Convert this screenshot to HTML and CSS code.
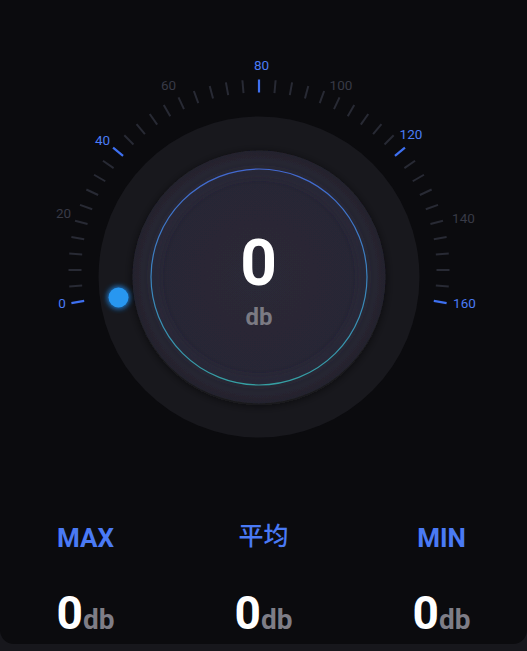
FILE: index.html
```html
<!DOCTYPE html>
<html lang="zh">
<head>
<meta charset="utf-8">
<title>分贝仪</title>
<link rel="stylesheet" href="styles.css">
</head>
<body>
<div class="card">
  <svg class="gauge" width="527" height="470" viewBox="0 0 527 470">
    <defs>
      <radialGradient id="innerFill" cx="50%" cy="50%" r="50%">
        <stop offset="0%" stop-color="#2a2937"/>
        <stop offset="85%" stop-color="#282734"/>
        <stop offset="100%" stop-color="#24232d"/>
      </radialGradient>
      <linearGradient id="ringStroke" x1="0" y1="0" x2="0" y2="1">
        <stop offset="0%" stop-color="#4268d2"/>
        <stop offset="55%" stop-color="#3a86bd"/>
        <stop offset="100%" stop-color="#35a0a3"/>
      </linearGradient>
      <filter id="shadow" x="-20%" y="-20%" width="140%" height="140%">
        <feDropShadow dx="0" dy="2" stdDeviation="5" flood-color="#0a0a0e" flood-opacity="0.6"/>
      </filter>
      <filter id="glow" x="-100%" y="-100%" width="300%" height="300%">
        <feGaussianBlur stdDeviation="2.5"/>
      </filter>
      <filter id="ringGlow" x="-10%" y="-10%" width="120%" height="120%">
        <feGaussianBlur stdDeviation="4"/>
      </filter>
    </defs>

    <circle class="disk-outer" cx="259" cy="277" r="160.5"/>
    <circle cx="259" cy="277" r="126.5" fill="url(#innerFill)" filter="url(#shadow)"/>
    <circle cx="259" cy="277" r="104" fill="none" stroke="#2d2c3b" stroke-width="4" filter="url(#ringGlow)"/>
    <circle cx="259" cy="277" r="108" fill="none" stroke="url(#ringStroke)" stroke-width="1.2"/>

    <g class="ticks">
      <line class="tick tick-major" x1="68.5" y1="270" x2="81.5" y2="270" transform="rotate(-10 259 270)"/>
      <line class="tick" x1="68.5" y1="270" x2="81.5" y2="270" transform="rotate(-5 259 270)"/>
      <line class="tick" x1="68.5" y1="270" x2="81.5" y2="270" transform="rotate(0 259 270)"/>
      <line class="tick" x1="68.5" y1="270" x2="81.5" y2="270" transform="rotate(5 259 270)"/>
      <line class="tick" x1="68.5" y1="270" x2="81.5" y2="270" transform="rotate(10 259 270)"/>
      <line class="tick" x1="68.5" y1="270" x2="81.5" y2="270" transform="rotate(15 259 270)"/>
      <line class="tick" x1="68.5" y1="270" x2="81.5" y2="270" transform="rotate(20 259 270)"/>
      <line class="tick" x1="68.5" y1="270" x2="81.5" y2="270" transform="rotate(25 259 270)"/>
      <line class="tick" x1="68.5" y1="270" x2="81.5" y2="270" transform="rotate(30 259 270)"/>
      <line class="tick" x1="68.5" y1="270" x2="81.5" y2="270" transform="rotate(35 259 270)"/>
      <line class="tick tick-major" x1="68.5" y1="270" x2="81.5" y2="270" transform="rotate(40 259 270)"/>
      <line class="tick" x1="68.5" y1="270" x2="81.5" y2="270" transform="rotate(45 259 270)"/>
      <line class="tick" x1="68.5" y1="270" x2="81.5" y2="270" transform="rotate(50 259 270)"/>
      <line class="tick" x1="68.5" y1="270" x2="81.5" y2="270" transform="rotate(55 259 270)"/>
      <line class="tick" x1="68.5" y1="270" x2="81.5" y2="270" transform="rotate(60 259 270)"/>
      <line class="tick" x1="68.5" y1="270" x2="81.5" y2="270" transform="rotate(65 259 270)"/>
      <line class="tick" x1="68.5" y1="270" x2="81.5" y2="270" transform="rotate(70 259 270)"/>
      <line class="tick" x1="68.5" y1="270" x2="81.5" y2="270" transform="rotate(75 259 270)"/>
      <line class="tick" x1="68.5" y1="270" x2="81.5" y2="270" transform="rotate(80 259 270)"/>
      <line class="tick" x1="68.5" y1="270" x2="81.5" y2="270" transform="rotate(85 259 270)"/>
      <line class="tick tick-major" x1="68.5" y1="270" x2="81.5" y2="270" transform="rotate(90 259 270)"/>
      <line class="tick" x1="68.5" y1="270" x2="81.5" y2="270" transform="rotate(95 259 270)"/>
      <line class="tick" x1="68.5" y1="270" x2="81.5" y2="270" transform="rotate(100 259 270)"/>
      <line class="tick" x1="68.5" y1="270" x2="81.5" y2="270" transform="rotate(105 259 270)"/>
      <line class="tick" x1="68.5" y1="270" x2="81.5" y2="270" transform="rotate(110 259 270)"/>
      <line class="tick" x1="68.5" y1="270" x2="81.5" y2="270" transform="rotate(115 259 270)"/>
      <line class="tick" x1="68.5" y1="270" x2="81.5" y2="270" transform="rotate(120 259 270)"/>
      <line class="tick" x1="68.5" y1="270" x2="81.5" y2="270" transform="rotate(125 259 270)"/>
      <line class="tick" x1="68.5" y1="270" x2="81.5" y2="270" transform="rotate(130 259 270)"/>
      <line class="tick" x1="68.5" y1="270" x2="81.5" y2="270" transform="rotate(135 259 270)"/>
      <line class="tick tick-major" x1="68.5" y1="270" x2="81.5" y2="270" transform="rotate(140 259 270)"/>
      <line class="tick" x1="68.5" y1="270" x2="81.5" y2="270" transform="rotate(145 259 270)"/>
      <line class="tick" x1="68.5" y1="270" x2="81.5" y2="270" transform="rotate(150 259 270)"/>
      <line class="tick" x1="68.5" y1="270" x2="81.5" y2="270" transform="rotate(155 259 270)"/>
      <line class="tick" x1="68.5" y1="270" x2="81.5" y2="270" transform="rotate(160 259 270)"/>
      <line class="tick" x1="68.5" y1="270" x2="81.5" y2="270" transform="rotate(165 259 270)"/>
      <line class="tick" x1="68.5" y1="270" x2="81.5" y2="270" transform="rotate(170 259 270)"/>
      <line class="tick" x1="68.5" y1="270" x2="81.5" y2="270" transform="rotate(175 259 270)"/>
      <line class="tick" x1="68.5" y1="270" x2="81.5" y2="270" transform="rotate(180 259 270)"/>
      <line class="tick" x1="68.5" y1="270" x2="81.5" y2="270" transform="rotate(185 259 270)"/>
      <line class="tick tick-major" x1="68.5" y1="270" x2="81.5" y2="270" transform="rotate(190 259 270)"/>
    </g>

    <g class="labels">
      <text class="lbl lbl-major" x="62" y="307.5">0</text>
      <text class="lbl" x="63.5" y="218">20</text>
      <text class="lbl lbl-major" x="102.5" y="145">40</text>
      <text class="lbl" x="168.5" y="90">60</text>
      <text class="lbl lbl-major" x="261.5" y="69.5">80</text>
      <text class="lbl" x="341" y="90">100</text>
      <text class="lbl lbl-major" x="411" y="138.5">120</text>
      <text class="lbl" x="463.5" y="222.5">140</text>
      <text class="lbl lbl-major" x="464.5" y="307.5">160</text>
    </g>

    <circle cx="118.5" cy="297.5" r="11.5" fill="#1f8cf0" opacity="0.75" filter="url(#glow)"/>
    <circle class="dot" cx="118.5" cy="297.5" r="10"/>

    <text class="value" x="258.5" y="285">0</text>
    <text class="unit" x="259" y="325">db</text>
  </svg>

  <div class="stats">
    <div class="stat-label">MAX</div>
    <div class="stat-label stat-label-cjk">平均</div>
    <div class="stat-label">MIN</div>
    <div class="stat-value"><span class="num">0</span><span class="db">db</span></div>
    <div class="stat-value"><span class="num">0</span><span class="db">db</span></div>
    <div class="stat-value"><span class="num">0</span><span class="db">db</span></div>
  </div>
</div>
</body>
</html>
```

FILE: styles.css
```css
html, body {
  margin: 0;
  padding: 0;
  background: #17171c;
}

body {
  width: 527px;
  height: 651px;
  overflow: hidden;
  font-family: Roboto, "Noto Sans CJK SC", sans-serif;
}

.card {
  width: 527px;
  height: 644px;
  background: #0b0b0e;
  border-radius: 0 0 14px 14px;
  overflow: hidden;
}

.gauge {
  display: block;
}

.disk-outer {
  fill: #18181d;
}

.tick {
  stroke: #282a34;
  stroke-width: 2;
}

.tick-major {
  stroke: #3e70f0;
  stroke-width: 2.2;
}

.lbl {
  font-family: Roboto, sans-serif;
  font-size: 13.5px;
  fill: #383a46;
  text-anchor: middle;
}

.lbl-major {
  fill: #4a7cf5;
}

.dot {
  fill: #2897f0;
}

.value {
  font-family: Roboto, sans-serif;
  font-weight: 700;
  font-size: 64px;
  fill: #ffffff;
  text-anchor: middle;
}

.unit {
  font-family: Roboto, sans-serif;
  font-weight: 700;
  font-size: 24px;
  fill: #7b7a83;
  text-anchor: middle;
}

.stats {
  display: grid;
  grid-template-columns: repeat(3, 178px);
  justify-content: center;
  row-gap: 35px;
  padding-top: 53px;
  padding-bottom: 6px;
}

.stat-label {
  text-align: center;
  font-family: Roboto, "Noto Sans CJK SC", sans-serif;
  font-weight: 700;
  font-size: 26px;
  line-height: 30px;
  height: 30px;
  color: #4a7af5;
}

.stat-label-cjk {
  font-family: "Noto Sans CJK SC", sans-serif;
  font-weight: 500;
  font-size: 25px;
  margin-top: -4px;
  margin-bottom: 4px;
}

.stat-value {
  text-align: center;
  font-family: Roboto, sans-serif;
  font-weight: 700;
  line-height: 50px;
  height: 50px;
  white-space: nowrap;
}

.num {
  font-size: 46px;
  color: #ffffff;
}

.db {
  font-size: 28px;
  color: #7e7d86;
}
```
